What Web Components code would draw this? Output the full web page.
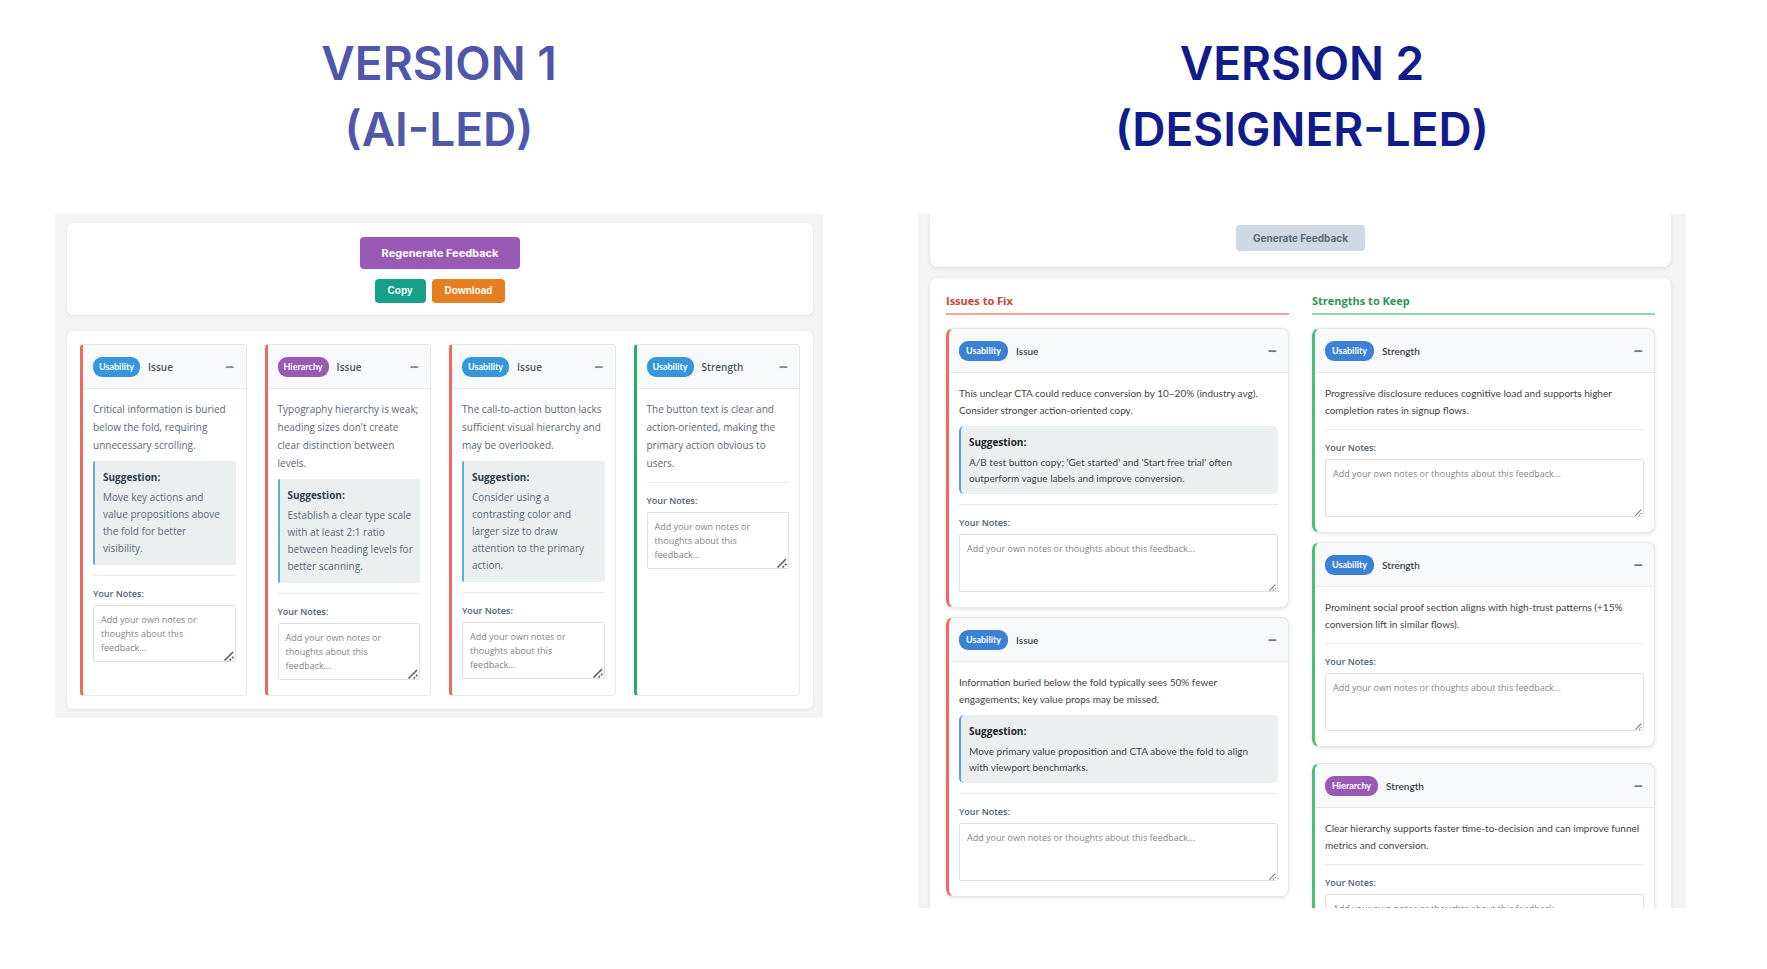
<!DOCTYPE html>
<html lang="en">
<head>
<meta charset="utf-8">
<meta name="viewport" content="width=device-width, initial-scale=1">
<title>Feedback panel: version 1 and version 2</title>
<style>
  body { margin: 0; background: #fff; font-family: "Open Sans", "Noto Sans", sans-serif; }
</style>
</head>
<body>
<compare-page>
  <version-block tone="soft">
    <span slot="title">VERSION 1</span>
    <span slot="subtitle">(AI-LED)</span>
    <ai-panel></ai-panel>
  </version-block>
  <version-block tone="deep">
    <span slot="title">VERSION 2</span>
    <span slot="subtitle">(DESIGNER-LED)</span>
    <designer-panel></designer-panel>
  </version-block>
</compare-page>

<script>
function define(name, html, setup) {
  const template = document.createElement('template');
  template.innerHTML = html;
  customElements.define(name, class extends HTMLElement {
    constructor() {
      super();
      this.attachShadow({ mode: 'open' }).append(template.content.cloneNode(true));
    }
    connectedCallback() {
      if (setup) setup(this, this.shadowRoot);
    }
  });
}

define('compare-page', `
  <style>
    :host { display: block; }
    main { display: grid; grid-template-columns: minmax(0, 1fr) minmax(0, 1fr); gap: 95px; align-items: start; padding: 30px 81px 0 55px; }
  </style>
  <main><slot></slot></main>
`);

define('version-block', `
  <style>
    :host { display: block; --title: #4f57ab; }
    :host([tone="deep"]) { --title: #101c8c; }
    h1 { margin: 0 0 52px; color: var(--title); font: 600 46px/66px Inter, sans-serif; text-align: center; }
    h1 ::slotted(span) { display: block; }
  </style>
  <section>
    <h1><slot name="title"></slot><slot name="subtitle"></slot></h1>
    <slot></slot>
  </section>
`);

define('action-button', `
  <style>
    :host { display: block; }
    button { display: block; height: 24px; padding: 0 13px; border: 0; border-radius: 4px; color: #fff; background: #16a085; font: 700 10px/16px "Liberation Sans", Arial, sans-serif; white-space: nowrap; cursor: pointer; }
    :host([kind="download"]) button { background: #e67e22; }
    :host([kind="primary"]) button { height: 32px; padding: 0 22px; background: #9b59b6; font: 700 11px/16px Inter, sans-serif; }
    :host([kind="muted"]) button { height: 26px; padding: 0 17px; background: #cfd8e4; color: #5d6878; font: 700 10px/16px Inter, sans-serif; }
  </style>
  <button type="button"><slot></slot></button>
`);

define('feedback-card', `
  <style>
    :host {
      display: flex; flex-direction: column; box-sizing: border-box; min-width: 0;
      border: 1px solid #e6e8ea; border-left: 3px solid var(--edge);
      border-radius: var(--card-radius, 4px); background: #fff; overflow: hidden;
      box-shadow: var(--card-shadow, none);
      --edge: var(--issue-edge, #ef6a5e);
      --badge: var(--usability, #3498db);
    }
    :host([kind="Strength"]) { --edge: var(--strength-edge, #27ae60); }
    :host([category="Hierarchy"]) { --badge: #9b59b6; }
    header { display: flex; align-items: center; gap: 8px; height: 43px; padding: 0 10px; background: #f8f9fb; border-bottom: 1px solid #e9ebed; }
    .badge { padding: 0 var(--badge-pad, 6px); border-radius: 9px; background: var(--badge); color: #fff; font: 700 9px/20px Lato, sans-serif; }
    h3 { flex: 1; margin: 0; color: var(--head-ink, #4a5560); font: 600 10px/16px var(--head-font, "Open Sans"), sans-serif; }
    header button { width: 12px; height: 20px; padding: 0; border: 0; background: none; color: var(--toggle, #7f8c8d); font: 700 16px/20px "Open Sans", sans-serif; cursor: pointer; }
    .body { padding: var(--body-top, 11px) 10px 15px; }
    p { margin: 0; color: var(--ink, #5a6878); font: 400 10px/var(--body-line, 18px) var(--copy-font, "Open Sans"), sans-serif; }
    aside { margin-top: 7px; padding: 8px var(--tip-end, 5px) 8px 8px; border-left: 2px solid var(--accent, #5dade2); border-radius: var(--tip-radius, 2px); background: #ebeff0; }
    aside[hidden] { display: none; }
    h4 { margin: 0 0 3px; color: var(--tip-ink, #2f3e4e); font: 700 10px/17px "Open Sans", sans-serif; }
    aside p { line-height: var(--tip-line, 17px); }
    .notes { margin-top: 10px; padding-top: 11px; border-top: 1px solid #e9ebed; }
    label { display: block; margin-bottom: 4px; color: #4f5f70; font: 600 9px/14px "Open Sans", sans-serif; }
    .field { position: relative; display: grid; }
    textarea { box-sizing: border-box; width: 100%; height: var(--field, 57px); padding: 7px; border: 1px solid #dfe2e4; border-radius: 2px; background: #fff; color: #333; font: 400 9px/14px "Open Sans", sans-serif; resize: vertical; overflow: hidden; }
    textarea::placeholder { color: #858585; opacity: 1; }
    textarea::-webkit-resizer { display: none; }
    svg { position: absolute; right: 2px; bottom: 1px; width: var(--grip, 10px); height: var(--grip, 10px); pointer-events: none; stroke: var(--grip-ink, #555); fill: none; }
  </style>
  <header>
    <span class="badge"></span>
    <h3></h3>
    <button type="button" aria-label="Collapse">−</button>
  </header>
  <div class="body">
    <p class="copy"><slot></slot></p>
    <aside><h4>Suggestion:</h4><p><slot name="suggestion"></slot></p></aside>
    <div class="notes">
      <label for="notes">Your Notes:</label>
      <div class="field">
        <textarea id="notes" placeholder="Add your own notes or thoughts about this feedback..."></textarea>
        <svg viewBox="0 0 10 10" aria-hidden="true"><path d="M0.5 9.5 9 1M5.5 9.5 7 8M8 7.2 9.5 5.8" stroke-width="1.5"/></svg>
      </div>
    </div>
  </div>
`, (el, root) => {
  root.querySelector('.badge').textContent = el.getAttribute('category');
  root.querySelector('h3').textContent = el.getAttribute('kind');
  root.querySelector('aside').hidden = !el.querySelector('[slot="suggestion"]');
});

define('ai-panel', `
  <style>
    :host { display: block; padding: 9px 10px 9px 12px; background: #f4f4f4; }
    .box { border-radius: 6px; background: #fff; box-shadow: 0 1px 3px rgba(0, 0, 0, .09); }
    .actions { display: grid; justify-items: center; gap: 10px; padding: 14px 12px 12px; margin-bottom: 16px; }
    .row { display: flex; gap: 6px; }
    .cards { display: grid; grid-template-columns: repeat(4, minmax(0, 1fr)); gap: 18px; padding: 13px; }
  </style>
  <div class="box actions">
    <action-button kind="primary">Regenerate Feedback</action-button>
    <div class="row">
      <action-button>Copy</action-button>
      <action-button kind="download">Download</action-button>
    </div>
  </div>
  <div class="box cards">
    <feedback-card kind="Issue" category="Usability">Critical information is buried below the fold, requiring unnecessary scrolling.<span slot="suggestion">Move key actions and value propositions above the fold for better<br>visibility.</span></feedback-card>
    <feedback-card kind="Issue" category="Hierarchy">Typography hierarchy is weak; heading sizes don't create clear distinction between levels.<span slot="suggestion">Establish a clear type scale with at least 2:1 ratio between heading levels for better scanning.</span></feedback-card>
    <feedback-card kind="Issue" category="Usability">The call-to-action button lacks sufficient visual hierarchy and may be overlooked.<span slot="suggestion">Consider using a contrasting color and larger size to draw attention to the primary action.</span></feedback-card>
    <feedback-card kind="Strength" category="Usability">The button text is clear and action-oriented, making the primary action obvious to users.</feedback-card>
  </div>
`);

define('feedback-column', `
  <style>
    :host { display: block; min-width: 0; --head: #cf4436; --rule: #f5a59d; }
    :host([kind="strengths"]) { --head: #2f9455; --rule: #8fd6ab; }
    h2 { margin: 0 0 13px; padding-bottom: 4px; border-bottom: 2px solid var(--rule); color: var(--head); font: 700 11px/16px "Open Sans", sans-serif; }
    .list { display: grid; gap: 16px; }
  </style>
  <h2><slot name="heading"></slot></h2>
  <div class="list"><slot></slot></div>
`);

define('designer-panel', `
  <style>
    :host {
      display: block; box-sizing: border-box; max-height: calc(100vh - 275px); overflow: hidden; padding: 0 15px 0 12px; background: #f4f4f4;
      --card-radius: 8px; --card-shadow: 0 1px 4px rgba(0, 0, 0, .12);
      --issue-edge: #ec6a5e; --strength-edge: #4dbd7c; --usability: #3b82d6; --badge-pad: 7px;
      --head-font: Lato; --copy-font: Lato; --head-ink: #3a3f45; --ink: #444;
      --toggle: #6b7688; --body-top: 12px; --body-line: 17px; --tip-line: 16px; --tip-radius: 5px; --tip-end: 20px;
      --tip-ink: #222; --accent: #5b9be8; --field: 58px; --grip: 7px; --grip-ink: #777;
    }
    .box { background: #fff; box-shadow: 0 1px 4px rgba(0, 0, 0, .1); }
    .actions { display: grid; justify-items: center; padding: 11px 16px 16px; margin-bottom: 11px; border-radius: 0 0 8px 8px; }
    .columns { display: grid; grid-template-columns: minmax(0, 1fr) minmax(0, 1fr); gap: 23px; padding: 15px 16px 16px; border-radius: 8px 8px 0 0; }
    .group { display: grid; gap: 9px; }
  </style>
  <div class="box actions"><action-button kind="muted">Generate Feedback</action-button></div>
  <div class="box columns">
    <feedback-column kind="issues">
      <span slot="heading">Issues to Fix</span>
      <div class="group">
        <feedback-card kind="Issue" category="Usability">This unclear CTA could reduce conversion by 10–20% (industry avg). Consider stronger action-oriented copy.<span slot="suggestion">A/B test button copy; 'Get started' and 'Start free trial' often outperform vague labels and improve conversion.</span></feedback-card>
        <feedback-card kind="Issue" category="Usability">Information buried below the fold typically sees 50% fewer engagements; key value props may be missed.<span slot="suggestion">Move primary value proposition and CTA above the fold to align with viewport benchmarks.</span></feedback-card>
      </div>
    </feedback-column>
    <feedback-column kind="strengths">
      <span slot="heading">Strengths to Keep</span>
      <div class="group">
        <feedback-card kind="Strength" category="Usability">Progressive disclosure reduces cognitive load and supports higher completion rates in signup flows.</feedback-card>
        <feedback-card kind="Strength" category="Usability">Prominent social proof section aligns with high-trust patterns (+15% conversion lift in similar flows).</feedback-card>
      </div>
      <div class="group">
        <feedback-card kind="Strength" category="Hierarchy">Clear hierarchy supports faster time-to-decision and can improve funnel metrics and conversion.</feedback-card>
      </div>
    </feedback-column>
  </div>
`);
</script>
</body>
</html>
